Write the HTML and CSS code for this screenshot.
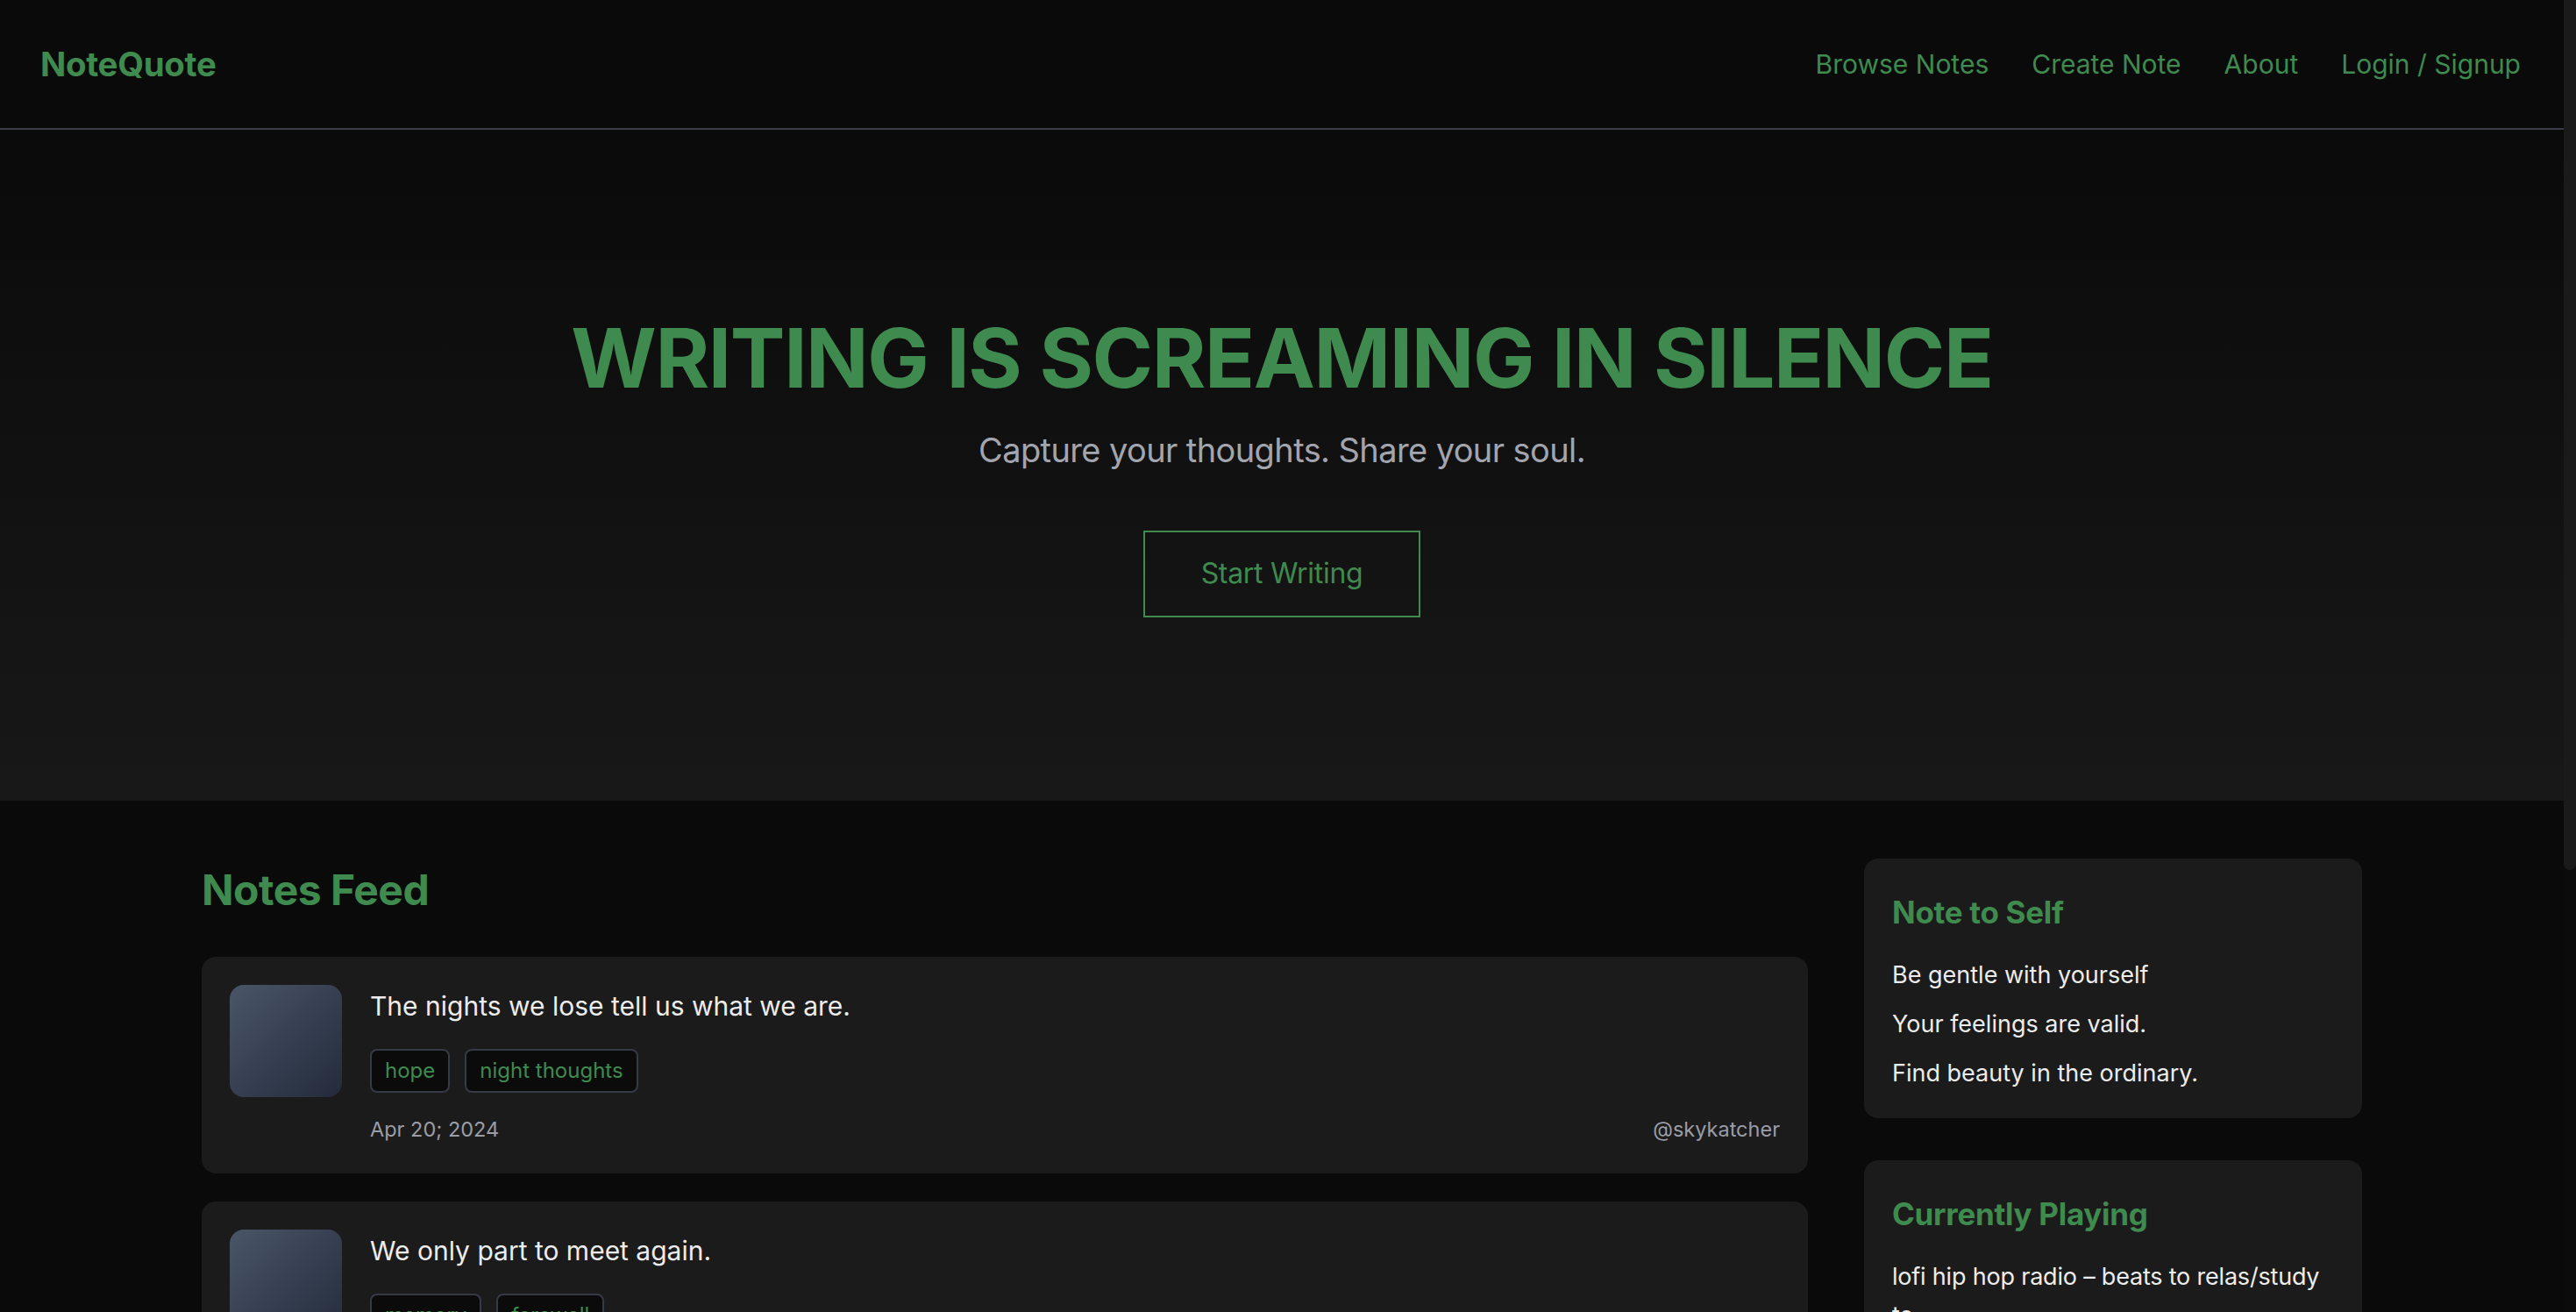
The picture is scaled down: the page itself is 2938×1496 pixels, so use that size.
FILE: index.html
```html
<!DOCTYPE html>
<html lang="en">
<head>
<meta charset="utf-8">
<title>NoteQuote</title>
<link rel="stylesheet" href="styles.css">
</head>
<body>
<header class="nav">
  <a class="logo" href="#">NoteQuote</a>
  <nav class="links">
    <a href="#">Browse Notes</a>
    <a href="#">Create Note</a>
    <a href="#">About</a>
    <a href="#">Login / Signup</a>
  </nav>
</header>

<section class="hero">
  <h1 class="hero-title">WRITING IS SCREAMING IN SILENCE</h1>
  <p class="hero-sub">Capture your thoughts. Share your soul.</p>
  <a class="btn" href="#">Start Writing</a>
</section>

<main class="content">
  <section class="feed">
    <h2 class="feed-title">Notes Feed</h2>

    <article class="card">
      <div class="avatar"></div>
      <div class="card-body">
        <p class="quote">The nights we lose tell us what we are.</p>
        <div class="tags"><span class="tag">hope</span><span class="tag">night thoughts</span></div>
        <div class="meta"><span>Apr 20; 2024</span><span>@skykatcher</span></div>
      </div>
    </article>

    <article class="card">
      <div class="avatar"></div>
      <div class="card-body">
        <p class="quote">We only part to meet again.</p>
        <div class="tags"><span class="tag">memory</span><span class="tag">farewell</span></div>
        <div class="meta"><span>Apr 18; 2024</span><span>@moonwriter</span></div>
      </div>
    </article>

    <article class="card">
      <div class="avatar"></div>
      <div class="card-body">
        <p class="quote">Some words are only brave at 3 a.m.</p>
        <div class="tags"><span class="tag">insomnia</span><span class="tag">honesty</span></div>
        <div class="meta"><span>Apr 15; 2024</span><span>@quietink</span></div>
      </div>
    </article>

    <article class="card">
      <div class="avatar"></div>
      <div class="card-body">
        <p class="quote">I keep your silence like a letter I never opened.</p>
        <div class="tags"><span class="tag">longing</span><span class="tag">love</span></div>
        <div class="meta"><span>Apr 11; 2024</span><span>@paperheart</span></div>
      </div>
    </article>
  </section>

  <aside class="sidebar">
    <div class="widget">
      <h3 class="widget-title">Note to Self</h3>
      <ul class="widget-list">
        <li>Be gentle with yourself</li>
        <li>Your feelings are valid.</li>
        <li>Find beauty in the ordinary.</li>
      </ul>
    </div>
    <div class="widget">
      <h3 class="widget-title">Currently Playing</h3>
      <p class="widget-text">lofi hip hop radio – beats to relas/study to</p>
    </div>
  </aside>
</main>

<div class="scrollbar" aria-hidden="true"><div class="scrollbar-thumb"></div></div>
</body>
</html>
```

FILE: styles.css
```css
* { box-sizing: border-box; }

html {
  background: #0a0a0a;
}

body {
  margin: 0;
  padding-right: 14px;
  background: #0a0a0a;
  color: #e8e8e8;
  font-family: Inter, "Noto Sans", "Liberation Sans", sans-serif;
}

a { text-decoration: none; }

/* fake browser scrollbar (overlay on the right edge) */
.scrollbar {
  position: fixed;
  top: 0;
  right: 0;
  width: 14px;
  height: 100vh;
  background: #0b0b0b;
}

.scrollbar-thumb {
  height: 992px;
  background: #1a1a1a;
  border-radius: 0 0 7px 7px;
}

.nav {
  height: 148px;
  display: flex;
  align-items: center;
  justify-content: space-between;
  padding: 0 49px 0 46px;
  background: #0a0a0a;
  border-bottom: 2px solid #3a3d48;
}

.logo {
  color: #3f8a4e;
  font-size: 38.4px;
  font-weight: 700;
  letter-spacing: -0.3px;
}

.links {
  display: flex;
  gap: 49px;
}

.links a {
  color: #3f8a4e;
  font-size: 30px;
}

.hero {
  background: linear-gradient(180deg, #0a0a0a 0%, #181818 100%);
  padding: 203px 0 209px;
  display: flex;
  flex-direction: column;
  align-items: center;
  text-align: center;
}

.hero-title {
  margin: 0;
  color: #3f8a4e;
  font-size: 94px;
  line-height: 115px;
  font-weight: 700;
  letter-spacing: -1.4px;
}

.hero-sub {
  margin: 18px 0 0;
  color: #a3a5ae;
  font-size: 38px;
  line-height: 58px;
  letter-spacing: -0.6px;
}

.btn {
  margin-top: 63px;
  border: 2px solid #3f8a4e;
  color: #3f8a4e;
  font-size: 32px;
  line-height: 38px;
  letter-spacing: -0.3px;
  padding: 28px 64px 29px;
}

.content {
  max-width: 2560px;
  margin: 0 auto;
  padding: 66px 48px 64px;
  display: grid;
  grid-template-columns: 1fr 568px;
  gap: 64px;
  align-items: start;
}

.feed-title {
  margin: 0 0 40px;
  color: #3f8a4e;
  font-size: 48px;
  line-height: 72px;
  font-weight: 700;
  letter-spacing: -0.5px;
}

.card {
  display: flex;
  gap: 32px;
  background: #1b1b1b;
  border-radius: 16px;
  padding: 32px;
  margin-bottom: 32px;
}

.avatar {
  flex: 0 0 128px;
  height: 128px;
  border-radius: 16px;
  background: linear-gradient(135deg, #4a5568 0%, #232b3b 100%);
}

.card-body {
  flex: 1;
  display: flex;
  flex-direction: column;
}

.quote {
  margin: 0 0 25px;
  font-size: 30px;
  line-height: 48px;
  color: #ececec;
}

.tags {
  display: flex;
  gap: 17px;
}

.tag {
  background: #0b0b0b;
  border: 2px solid #363a46;
  border-radius: 8px;
  color: #3f8a4e;
  font-size: 24px;
  line-height: 30px;
  padding: 8px 15px;
}

.meta {
  margin-top: 24px;
  display: flex;
  justify-content: space-between;
  color: #9b9da6;
  font-size: 23.5px;
  line-height: 36px;
}

.sidebar {
  display: flex;
  flex-direction: column;
  gap: 48px;
}

.widget {
  background: #1b1b1b;
  border-radius: 16px;
  padding: 35px 32px 29px;
}

.widget-title {
  margin: 0 0 24px;
  color: #3f8a4e;
  font-size: 35px;
  line-height: 52px;
  font-weight: 700;
  letter-spacing: -0.3px;
}

.widget-list {
  list-style: none;
  margin: 0;
  padding: 0;
}

.widget-list li {
  font-size: 27px;
  line-height: 44px;
  margin-bottom: 12px;
  color: #ececec;
}

.widget-list li:last-child { margin-bottom: 0; }

.widget-text {
  margin: 0;
  font-size: 27px;
  line-height: 44px;
  letter-spacing: -0.2px;
  color: #ececec;
}
```
